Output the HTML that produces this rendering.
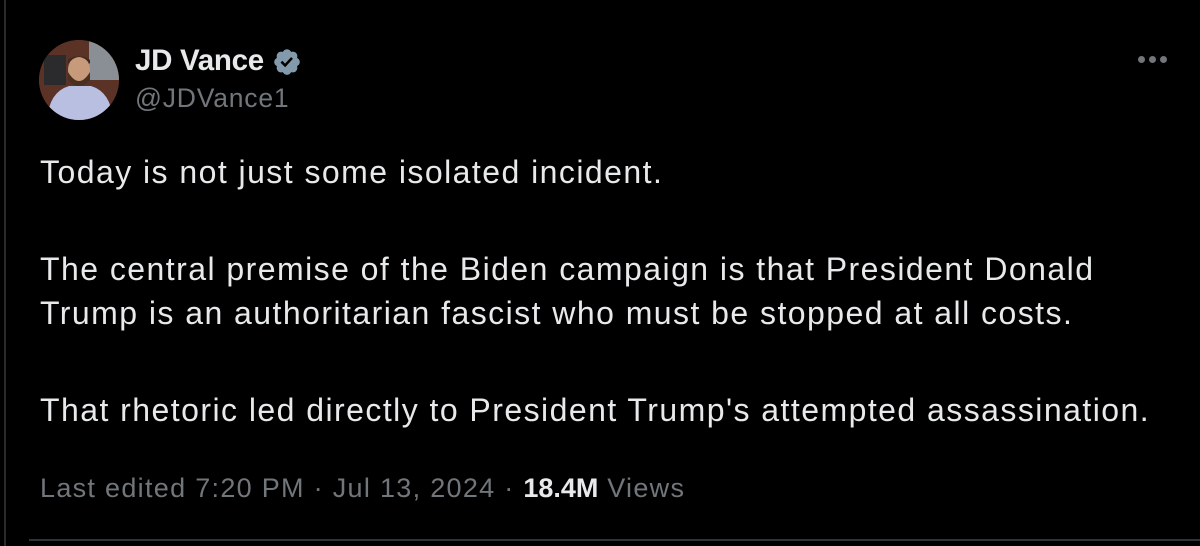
<!DOCTYPE html>
<html><head><style>
body{margin:0;width:1200px;height:546px;background:#000;overflow:hidden;font-family:"Liberation Sans",Arial,sans-serif;position:relative}
.bl{position:absolute;left:4px;top:0;width:2px;height:546px;background:#2a2a2a}
.av{position:absolute;left:39px;top:40px;width:80px;height:80px;border-radius:50%;overflow:hidden;background:#6b3a28}
.name{position:absolute;left:135px;top:44px;color:#e7e9ea;font-weight:bold;font-size:29.5px;letter-spacing:-0.3px}
.handle{position:absolute;left:135px;top:83px;color:#71767b;font-size:26.5px;letter-spacing:0.8px}
.body{position:absolute;left:40px;top:150px;color:#e7e9ea;font-size:32px;line-height:44px;letter-spacing:1.45px}
.body p{margin:0 0 53px 0}
.foot{position:absolute;left:40px;top:473px;color:#71767b;font-size:27px;letter-spacing:1.3px}
.foot b{color:#e7e9ea;letter-spacing:0}
.div{position:absolute;left:29px;top:539px;width:1171px;height:2px;background:#2f3336}
.dot{position:absolute;top:56px;width:7px;height:7px;border-radius:50%;background:#71767b}
</style></head><body>
<div class="bl"></div>
<div class="av">
<svg width="80" height="80" viewBox="0 0 80 80">
<rect width="80" height="80" fill="#5a3226"/>
<rect x="50" y="0" width="30" height="40" fill="#8a8f95"/>
<rect x="5" y="15" width="22" height="30" fill="#2b2b2e"/>
<path d="M8 80 Q10 52 30 46 L52 46 Q72 52 74 80Z" fill="#b9bfe0"/>
<ellipse cx="40" cy="30" rx="11" ry="14" fill="#c79a7c"/>
<path d="M29 32 Q40 50 51 32 L51 40 Q40 52 29 40Z" fill="#4a3020"/>
<path d="M29 24 Q40 10 51 24 L51 20 Q40 12 29 20Z" fill="#3e2a1c"/>
</svg></div>
<div class="name">JD Vance</div>
<svg style="position:absolute;left:272px;top:47px" width="30" height="30" viewBox="0 0 24 24"><path fill="#829aab" d="M22.25 12c0-1.430-.88-2.67-2.19-3.34.46-1.39.2-2.9-.81-3.91s-2.52-1.27-3.910-.81c-.66-1.310-1.91-2.19-3.34-2.19s-2.67.88-3.33 2.19c-1.4-.46-2.91-.2-3.92.81s-1.26 2.52-.8 3.91c-1.31.67-2.2 1.91-2.2 3.34s.89 2.67 2.2 3.34c-.46 1.39-.21 2.9.8 3.91s2.52 1.26 3.91.81c.67 1.31 1.91 2.19 3.34 2.19s2.68-.88 3.34-2.19c1.39.45 2.9.2 3.91-.81s1.27-2.52.81-3.91c1.31-.67 2.19-1.91 2.19-3.34z"/><path fill="#000" d="M10.54 16.2l-3.74-3.74 1.41-1.42 2.26 2.26 4.8-5.230 1.47 1.36z"/></svg>
<div class="handle">@JDVance1</div>
<div class="dot" style="left:1138px"></div><div class="dot" style="left:1149px"></div><div class="dot" style="left:1160px"></div>
<div class="body"><p>Today is not just some isolated incident.</p><p>The central premise of the Biden campaign is that President Donald<br>Trump is an authoritarian fascist who must be stopped at all costs.</p><p>That rhetoric led directly to President Trump's attempted assassination.</p></div>
<div class="foot">Last edited 7:20 PM · Jul 13, 2024 · <b>18.4M</b> Views</div>
<div class="div"></div>
</body></html>
